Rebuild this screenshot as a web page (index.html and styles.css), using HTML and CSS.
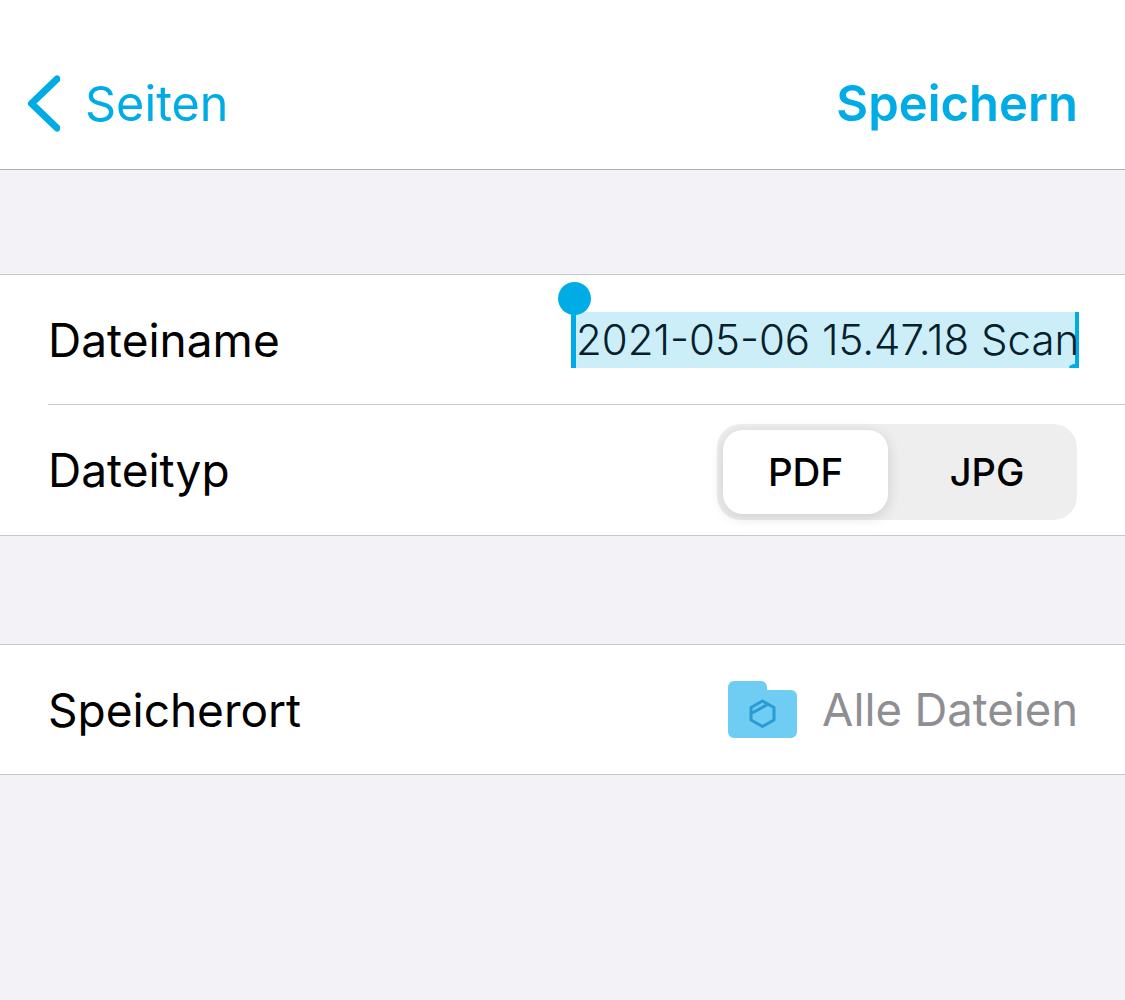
FILE: index.html
```html
<!DOCTYPE html>
<html lang="de">
<head>
  <meta charset="UTF-8">
  <title>Speichern</title>
  <link rel="stylesheet" href="styles.css">
</head>
<body>
  <header class="nav">
    <div class="nav-back">
      <svg class="chevron" width="36" height="60" viewBox="0 0 36 60">
        <path d="M33 5 L7.500 29.500 L33 54" fill="none" stroke="#00ace6" stroke-width="7" stroke-linecap="round" stroke-linejoin="round"/>
      </svg>
      <span>Seiten</span>
    </div>
    <div class="nav-save">Speichern</div>
  </header>

  <section class="group group-file">
    <div class="row row-divided">
      <span class="label">Dateiname</span>
      <div class="selection">
        <span class="knob"></span>
        2021-05-06 15.47.18 Scan
      </div>
    </div>
    <div class="row">
      <span class="label">Dateityp</span>
      <div class="segments">
        <div class="segment segment-active">PDF</div>
        <div class="segment">JPG</div>
      </div>
    </div>
  </section>

  <section class="group group-place">
    <div class="row">
      <span class="label">Speicherort</span>
      <div class="place">
        <svg width="69" height="57" viewBox="0 0 69 57">
          <path d="M6 0 H33 a6 6 0 0 1 6 6 V9 H63 a6 6 0 0 1 6 6 V51 a6 6 0 0 1 -6 6 H6 a6 6 0 0 1 -6 -6 V6 a6 6 0 0 1 6 -6 Z" fill="#6fcdf3"/>
          <path d="M34.500 20 L46 26.500 V39 L34.500 45.500 L23 39 V26.500 Z M24 32 L40.500 23" fill="none" stroke="#2b9bd6" stroke-width="3" stroke-linejoin="round"/>
        </svg>
        <span>Alle Dateien</span>
      </div>
    </div>
  </section>
</body>
</html>
```

FILE: styles.css
```css
* {
  margin: 0;
  padding: 0;
  box-sizing: border-box;
}

body {
  font-family: 'Inter', 'Liberation Sans', sans-serif;
  font-size: 46px;
  background: #f2f2f7;
  color: #000;
  height: 1000px;
  overflow: hidden;
}

/* Nav bar */
.nav {
  height: 170px;
  padding: 38px 47px 0 24px;
  background: #fff;
  border-bottom: 1px solid #b2b2b4;
  display: flex;
  justify-content: space-between;
  align-items: center;
  color: #00ace6;
  font-size: 48.500px;
}

.nav-back {
  display: flex;
  align-items: center;
  gap: 25px;
}

.chevron {
  display: block;
}

.nav-save {
  font-size: 49px;
  font-weight: 600;
}

/* Grouped rows */
.group {
  background: #fff;
  border-top: 1px solid #c8c8ca;
  border-bottom: 1px solid #c8c8ca;
}

.group-file {
  margin-top: 104px;
}

.group-place {
  margin-top: 108px;
}

.row {
  height: 130px;
  margin-left: 48px;
  padding: 0 48px 0 0;
  display: flex;
  justify-content: space-between;
  align-items: center;
}

.group-place .row {
  height: 129px;
}

.row-divided {
  border-bottom: 1px solid #c8c8ca;
  padding-right: 46px;
}

/* Selected file name */
.selection {
  position: relative;
  height: 56px;
  width: 508px;
  background: #cbeef8;
  border-left: 5px solid #00ace6;
  border-right: 4px solid #00ace6;
  color: #06202c;
  font-size: 42px;
  font-weight: 300;
  line-height: 56px;
  white-space: nowrap;
}

.selection::after {
  content: "";
  position: absolute;
  right: 0;
  bottom: 0;
  width: 6px;
  height: 4px;
  background: #00ace6;
  border-top-left-radius: 100%;
}

.knob {
  position: absolute;
  top: -30px;
  left: -18px;
  width: 33px;
  height: 33px;
  border-radius: 50%;
  background: #00ace6;
}

/* PDF / JPG switch */
.segments {
  width: 360px;
  height: 96px;
  margin-top: 4px;
  padding: 6px 0 6px 6px;
  background: #eeeeee;
  border-radius: 24px;
  display: flex;
  font-size: 38px;
  font-weight: 500;
}

.segment {
  flex: 1;
  display: flex;
  justify-content: center;
  align-items: center;
}

.segment-active {
  flex: 0 0 165px;
  margin-right: 9px;
  background: #fff;
  border-radius: 20px;
  box-shadow: 0 3px 14px rgba(0, 0, 0, 0.14);
  font-size: 38.500px;
  font-weight: 550;
}

/* Location */
.place {
  display: flex;
  align-items: center;
  gap: 25px;
  margin-right: -1px;
  color: #8e8e93;
  font-size: 45.400px;
}

.place svg {
  display: block;
}
```
